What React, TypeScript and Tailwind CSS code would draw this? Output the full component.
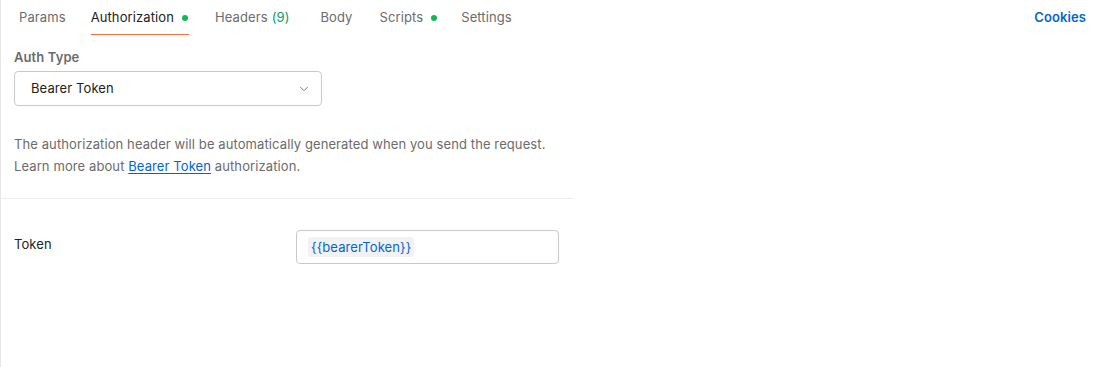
import { ChevronDown } from 'lucide-react'

const tabs = [
  { label: 'Params', ml: '' },
  { label: 'Authorization', dot: true, active: true, ml: 'ml-[25px]' },
  { label: 'Headers', count: '(9)', ml: 'ml-[26px]' },
  { label: 'Body', ml: 'ml-[31px]' },
  { label: 'Scripts', dot: true, ml: 'ml-[27px]' },
  { label: 'Settings', ml: 'ml-[23px]' },
]

const App = () => {
  return (
    <div
      className="w-[1093px] h-[367px] bg-white border-l border-[#e6e6e6] text-[13px] tracking-[0.1px] text-[#212121]"
      style={{ fontFamily: 'Inter, "Liberation Sans", sans-serif' }}
    >
      <div className="flex items-start justify-between pr-[7px]">
        <div className="flex pl-[18px]">
          {tabs.map((t) => (
            <div
              key={t.label}
              className={
                'flex items-center h-[35px] pt-[1px] ' +
                t.ml +
                ' ' +
                (t.active ? 'border-b border-[#ff6c37] text-[#212121]' : 'text-[#6b6b6b]')
              }
            >
              <span>{t.label}</span>
              {t.count && <span className="ml-[4px] text-[#0b9a6d]">{t.count}</span>}
              {t.dot && <span className="ml-[8px] mr-[1px] w-[6px] h-[6px] rounded-full bg-[#0cbb52]" />}
            </div>
          ))}
        </div>
        <div className="h-[35px] flex items-center font-semibold text-[#0265d2]">Cookies</div>
      </div>

      <div className="w-[573px] border-b border-[#ededed] pl-[13px] pt-[12px] pb-[21px]">
        <div className="font-semibold text-[#6b6b6b] leading-[20px]">Auth Type</div>
        <div className="mt-[4px] w-[308px] h-[35px] border border-[#c9c9c9] rounded-[4px] flex items-center justify-between pl-[16px] pr-[10px]">
          <span className="text-[#212121]">Bearer Token</span>
          <ChevronDown size={14} strokeWidth={1.5} className="text-[#6b6b6b]" />
        </div>
        <div className="mt-[27px] text-[#6b6b6b] leading-[22px]">
          <p>The authorization header will be automatically generated when you send the request.</p>
          <p>
            Learn more about{' '}
            <a className="text-[#0265d2] underline underline-offset-2">Bearer Token</a> authorization.
          </p>
        </div>
      </div>

      <div className="flex w-[573px] pl-[13px] pt-[31px]">
        <div className="w-[282px] pt-[4px] leading-[20px]">Token</div>
        <div className="w-[263px] h-[34px] border border-[#c9c9c9] rounded-[4px] flex items-center pl-[11px]">
          <span className="bg-[#f2f2f2] rounded-[3px] px-[3px] text-[#0265d2] leading-[20px]">
            {'{{bearerToken}}'}
          </span>
        </div>
      </div>
    </div>
  )
}

export default App
